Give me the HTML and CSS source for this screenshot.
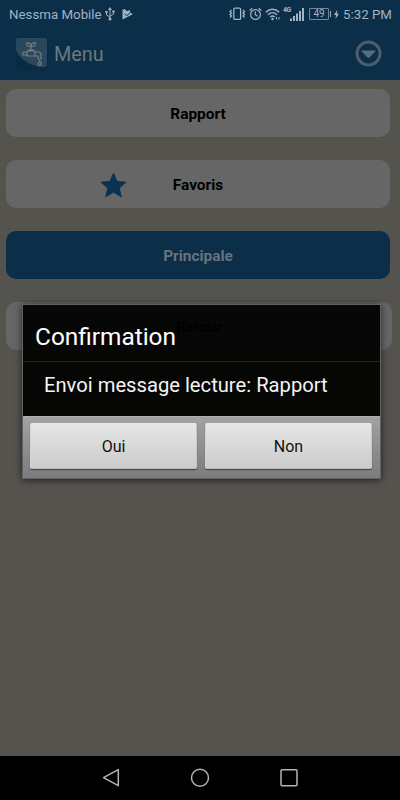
FILE: index.html
```html
<!DOCTYPE html>
<html lang="fr">
<head>
  <meta charset="UTF-8" />
  <meta name="viewport" content="width=device-width, initial-scale=1.0"/>
  <title>Menu</title>
  <link rel="stylesheet" href="styles.css">
</head>
<body>
  <div class="screen">
    <header class="header">
      <div class="status">
        <span class="carrier">Nessma Mobile</span>
        <svg class="usb" width="10" height="14" viewBox="0 0 10 14" fill="none" stroke="currentColor">
          <path d="M5 2v10M1.5 5v3L5 10M8.5 4.5V7L5 9"/>
          <path d="M5 0l2 3H3zM7.3 3.5h2.4v2H7.3z" fill="currentColor" stroke="none"/>
          <circle cx="1.5" cy="5" r="1.3" fill="currentColor" stroke="none"/>
          <circle cx="5" cy="12" r="1.5" fill="currentColor" stroke="none"/>
        </svg>
        <svg class="play" width="11" height="11" viewBox="0 0 11 11">
          <path d="M.5.5L3 .3l2 2L7.6 1l.6 2.3 2.5 2L.5 10.6z" fill="currentColor"/>
          <path d="M2.7 4.7l2 2 4-3.5" fill="none" stroke="#0b2e49"/>
        </svg>

        <svg class="vibrate" width="17" height="14" viewBox="0 0 17 14" fill="none" stroke="currentColor">
          <rect x="4.8" y="1.2" width="6.8" height="11.2" rx="1" stroke-width="1.3"/>
          <path d="M2.5 3L1 4.5 2.5 6 1 7.5 2.5 9 1 10.5M14 3l1.5 1.5L14 6l1.5 1.5L14 9l1.5 1.5" stroke-width="1.3"/>
        </svg>
        <svg class="alarm" width="13" height="14" viewBox="0 0 13 14" fill="none" stroke="currentColor" stroke-width="1.2">
          <circle cx="6.5" cy="7.5" r="4.9"/>
          <path d="M6.3 4.5v3.3L8.5 9.3M.7 3.5L3.3 1.3M12.3 3.5L9.7 1.3"/>
        </svg>
        <svg class="wifi" width="16" height="14" viewBox="0 0 16 14" fill="none" stroke="currentColor" stroke-width="1.5">
          <path d="M.8 5.2C4.8 1.2 10.2 1.2 14.2 5.2M3 7.7c2.7-2.6 6.3-2.6 9 0M5.2 10c1.5-1.3 3.1-1.3 4.6 0"/>
          <circle cx="7.5" cy="12" r="1.2" fill="currentColor" stroke="none"/>
          <path d="M11.5 10v2.5M14 10v2.5" stroke-width="1"/>
        </svg>
        <span class="network">4G</span>
        <svg class="signal" width="14" height="13" viewBox="0 0 14 13" fill="currentColor">
          <path d="M0 10.5h2V13H0zM3 8h2v5H3zM6 5.5h2V13H6zM9 3h2v10H9zM12 0h2v13h-2z"/>
        </svg>
        <span class="battery">49</span>
        <svg class="bolt" width="5" height="9" viewBox="0 0 5 9"><path d="M3.2 0L0 5h2L1.5 9 5 3.7H3z" fill="currentColor"/></svg>
        <span class="clock">5:32 PM</span>
      </div>
      <div class="title-bar">
        <svg class="logo" width="32" height="33" viewBox="0 0 32 33" fill="none">
          <path d="M0 30V3q0-3 3-3h26q3 0 3 3v27q0 3-3 3H3q-3 0-3-3z" fill="#0a2b44"/>
          <path d="M0 13V3q0-2 2-2h27q2 0 2 2v25q0 2-2 2h-5C14 28 4 23 0 13z" fill="#29485d"/>
          <g stroke="#777d7f" stroke-width="1.2" stroke-linejoin="round">
            <path d="M15 13V9.5M15 9.5c-4 0-5-2-4.5-3.5 3-.5 4.5.8 4.5 3.5zM15 9.5c4 0 5-2 4.5-3.5-3-.5-4.5.8-4.5 3.5z"/>
            <path d="M7 15h4v3H7zM11 14h8v5h-8zM19 15h3q3 0 3 3v4h-3v-3h-3zM12 13h6"/>
            <path d="M23.8 23.8c-3 4-1.5 4.5 0 4.5s3-.5 0-4.5z"/>
          </g>
        </svg>
        <h1 class="title">Menu</h1>
        <svg class="dropdown" width="27" height="27" viewBox="0 0 27 27">
          <circle cx="13.5" cy="13.5" r="11.5" fill="none" stroke="#4c5e6b" stroke-width="3"/>
          <path d="M6.8 10.5h13.4q.7.2.2.9l-5.9 6.2q-1 .8-2 0l-5.9-6.2q-.5-.7.2-.9z" fill="#5c6b76"/>
        </svg>
      </div>
    </header>

    <main class="menu">
      <div class="item">Rapport</div>
      <div class="item">
        <svg class="star" width="27" height="26" viewBox="0 0 27 26">
          <path d="M13.5 1.2l3.5 8.2 9 .8-6.8 5.9 2.1 8.7-7.8-4.6-7.8 4.6 2.1-8.7L1 10.2l9-.8z" fill="#0b3252" stroke="#0b3252" stroke-linejoin="round"/>
        </svg>
        Favoris
      </div>
      <div class="item primary">Principale</div>
      <div class="item wide">Retour</div>
    </main>

    <nav class="navbar">
      <svg width="18" height="20" viewBox="0 0 18 20"><path d="M16.3 1.7v16L1.5 9.7z"/></svg>
      <svg width="20" height="20" viewBox="0 0 20 20"><circle cx="10" cy="9.7" r="8.5"/></svg>
      <svg width="18" height="20" viewBox="0 0 18 20"><rect x="1" y="1.8" width="16" height="16" rx="1"/></svg>
    </nav>
  </div>

  <!-- Confirmation -->
  <div class="dialog">
    <h2 class="dialog-title">Confirmation</h2>
    <p class="dialog-text">Envoi message lecture: Rapport</p>
    <div class="dialog-buttons">
      <button class="btn">Oui</button>
      <button class="btn">Non</button>
    </div>
  </div>
</body>
</html>
```
FILE: styles.css
```css
* { box-sizing: border-box; }
body { margin: 0; background: #000; font-family: Roboto, "Liberation Sans", sans-serif; }
svg { display: block; flex: none; }
.screen { width: 400px; height: 800px; display: flex; flex-direction: column; overflow: hidden; background: #55534e; }

/* Header */
.header { height: 80px; background: #0b2e49; }
.status { height: 28px; display: flex; align-items: center; padding: 0 9px; color: #a0b3c1; white-space: nowrap; }
.carrier { font-size: 13.3px; width: 92px; }
.usb { margin-left: 4px; }
.play { margin-left: 7px; margin-right: auto; }
.alarm { margin-left: 3px; }
.wifi { margin-left: 3px; }
.network { font-size: 7px; font-weight: bold; line-height: 8px; width: 8px; margin-left: 2px; align-self: flex-start; margin-top: 6px; letter-spacing: -.5px; }
.signal { margin-left: -1px; }
.battery { position: relative; width: 20px; height: 12px; margin-left: 5px; border: 1px solid #718899; border-radius: 1px; font-size: 10px; line-height: 10px; text-align: center; }
.battery::after { content: ""; position: absolute; right: -3px; top: 2px; width: 1px; height: 6px; background: currentColor; }
.bolt { margin-left: 5px; }
.clock { font-size: 13.3px; width: 48px; margin-left: 4px; }

.title-bar { height: 51px; display: flex; align-items: center; padding: 0 18px 0 16px; }
.title { margin: 1px auto 0 6px; font-size: 19.8px; font-weight: normal; color: #6d777e; }

/* Menu */
.menu { flex: 1; display: flex; flex-direction: column; gap: 23px; padding: 8px 8px 0 6px; border-top: 1px solid #4b5559; }
.item { position: relative; width: 384px; height: 48px; display: flex; align-items: center; justify-content: center; padding-top: 2px; background: #666; border-radius: 10px; font-size: 15.4px; font-weight: bold; color: #000; }
.primary { background: #0b2e49; color: #66737c; }
.wide { width: 386px; }
.star { position: absolute; left: 94px; top: 12px; }

/* Dialog */
.dialog { position: absolute; left: 22px; top: 304px; width: 359px; height: 175px; border: 1px solid #626262; background: rgba(0,0,0,.93); box-shadow: 0 1px 7px rgba(0,0,0,.65); color: #fff; }
.dialog-title { margin: 0; height: 57px; padding-left: 12px; font-size: 24.4px; font-weight: normal; line-height: 64px; border-bottom: 1px solid #222; }
.dialog-text { margin: 0; height: 54px; padding-left: 21px; font-size: 20.2px; line-height: 47px; color: #f4f4f4; }
.dialog-buttons { height: 62px; display: flex; gap: 8px; padding: 6px 8px 9px 7px; background: linear-gradient(#a2a2a2, #7c7c7c); border-top: 1px solid #b0b0b0; }
.btn { flex: 1; height: 46px; padding: 0; border: 1px solid; border-color: #e8e8e8 #c8c8c8 #bbb #d5d5d5; border-radius: 2px; background: linear-gradient(#e6e6e6, #cbcbcb); box-shadow: 0 1px 1px rgba(0,0,0,.5); font-family: inherit; font-size: 16px; color: #111; }

/* Android navigation */
.navbar { height: 44px; display: flex; align-items: center; justify-content: space-between; padding: 0 102px; background: #000; }
.navbar svg { fill: none; stroke: #b4b4b4; stroke-width: 1.5; stroke-linejoin: round; }
```
